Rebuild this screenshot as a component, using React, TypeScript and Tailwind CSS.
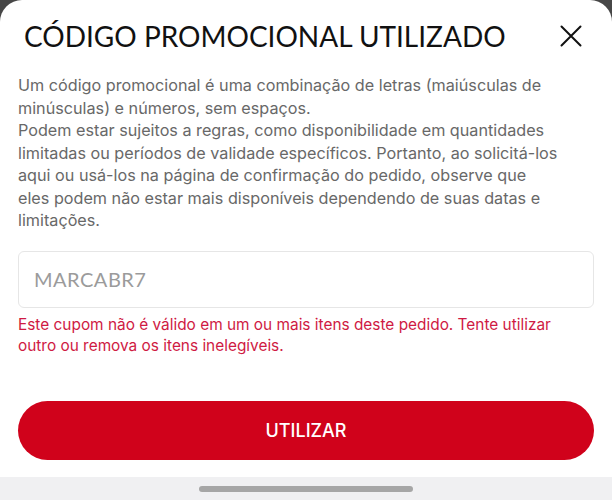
import React from 'react';

const bodyLines = [
  'Um código promocional é uma combinação de letras (maiúsculas de',
  'minúsculas) e números, sem espaços.',
  'Podem estar sujeitos a regras, como disponibilidade em quantidades',
  'limitadas ou períodos de validade específicos. Portanto, ao solicitá-los',
  'aqui ou usá-los na página de confirmação do pedido, observe que',
  'eles podem não estar mais disponíveis dependendo de suas datas e',
  'limitações.',
];

const errorLines = [
  'Este cupom não é válido em um ou mais itens deste pedido. Tente utilizar',
  'outro ou remova os itens inelegíveis.',
];

const App: React.FC = () => {
  return (
    <div className="h-[500px] w-[612px] bg-[#474747] overflow-hidden" style={{ fontFamily: 'Inter, "Noto Sans", sans-serif' }}>
      <div className="flex h-full flex-col bg-white rounded-t-[22px]">
        {/* Header */}
        <div className="flex items-center justify-between pl-[24px] pr-[30px] pt-[18px]">
          <h1 className="font-['Lato'] text-[28px] leading-[36px] text-[#111111]">
            CÓDIGO PROMOCIONAL UTILIZADO
          </h1>
          <button className="flex h-[22px] w-[22px] items-center justify-center">
            <svg width="22" height="22" viewBox="0 0 22 22" fill="none" stroke="#111111" strokeWidth="2" strokeLinecap="round">
              <path d="M1.5 1.5 L20.5 20.5 M20.5 1.5 L1.5 20.5" />
            </svg>
          </button>
        </div>

        {/* Body */}
        <div className="px-[18px] pt-[20px]">
          <p className="whitespace-nowrap text-[16.2px] leading-[22.5px] text-[#686868]">
            {bodyLines.map((line) => (
              <span key={line} className="block">{line}</span>
            ))}
          </p>

          <div className="mt-[19px] flex h-[57px] items-center rounded-[6px] border border-[#e6e6e6] px-[15px]">
            <span className="font-['Lato'] text-[20px] tracking-[0.5px] text-[#9b9b9b]">MARCABR7</span>
          </div>

          <p className="mt-[6px] whitespace-nowrap text-[15.4px] leading-[21.5px] text-[#cf1a43]">
            {errorLines.map((line) => (
              <span key={line} className="block">{line}</span>
            ))}
          </p>

          <button className="mt-[44px] flex h-[59px] w-full items-center justify-center rounded-full bg-[#d0021b]">
            <span className="text-[18px] font-medium text-white">UTILIZAR</span>
          </button>
        </div>

        {/* Home indicator bar */}
        <div className="mt-auto flex h-[23px] justify-center bg-[#f0f0f2] pt-[9px]">
          <div className="h-[6px] w-[214px] rounded-full bg-[#a6a6a6]" />
        </div>
      </div>
    </div>
  );
};

export default App;
